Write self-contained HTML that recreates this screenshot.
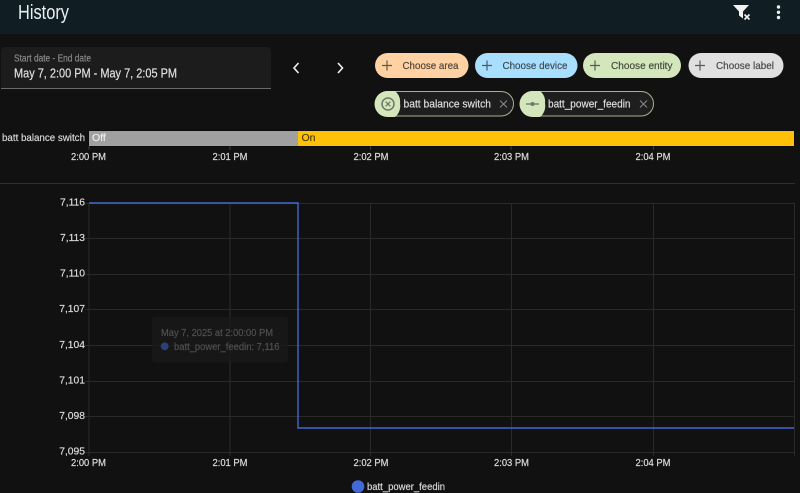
<!DOCTYPE html>
<html><head><meta charset="utf-8"><style>
html,body{margin:0;padding:0;background:#111;width:800px;height:493px;overflow:hidden}
svg{display:block;font-family:"Liberation Sans",sans-serif;filter:blur(.25px)}
.t text{stroke:currentColor;stroke-width:.18px}
</style></head><body>
<svg width="800" height="493" viewBox="0 0 800 493" xmlns="http://www.w3.org/2000/svg">
<rect width="800" height="493" fill="#111"/>
<rect width="800" height="34" fill="#101e24"/>
<text x="18" y="19" font-size="20" fill="#e8f0f2" textLength="51" lengthAdjust="spacingAndGlyphs">History</text>
<!-- filter icon -->
<path d="M733 5H749L743 11.500V18.500L739 15.500V11.500Z" fill="#f2f2f2"/>
<path d="M744.500 14.500L749.500 19.500M749.500 14.500L744.500 19.500" stroke="#f2f2f2" stroke-width="1.600" fill="none"/>
<circle cx="778.500" cy="7" r="1.700" fill="#eee"/><circle cx="778.500" cy="12.300" r="1.700" fill="#eee"/><circle cx="778.500" cy="17.500" r="1.700" fill="#eee"/>
<!-- date -->
<path d="M1 88V51a4 4 0 0 1 4-4H267a4 4 0 0 1 4 4V88Z" fill="#1c1c1c"/>
<rect x="1" y="88" width="270" height="1" fill="#6a6a6a"/>
<g class="t">
<text x="14" y="61.500" font-size="10" fill="#8a8a8a" color="#8a8a8a" textLength="77" lengthAdjust="spacingAndGlyphs">Start date - End date</text>
<text x="14" y="77.500" font-size="13" fill="#e1e1e1" color="#e1e1e1" textLength="163" lengthAdjust="spacingAndGlyphs">May 7, 2:00 PM - May 7, 2:05 PM</text>
</g>
<path d="M298.500 63L294 68L298.500 73" fill="none" stroke="#f0f0f0" stroke-width="1.600"/>
<path d="M338 63L342.500 68L338 73" fill="none" stroke="#f0f0f0" stroke-width="1.600"/>
<!-- chips -->
<rect x="375" y="53" width="93.500" height="25" rx="12.500" fill="#ffd1a3"/>
<rect x="475" y="53" width="102.500" height="25" rx="12.500" fill="#a9dffe"/>
<rect x="583" y="53" width="98" height="25" rx="12.500" fill="#d3e6bc"/>
<rect x="688.500" y="53" width="95" height="25" rx="12.500" fill="#e0e0e0"/>
<g stroke="#5c5c52" stroke-width="1.200" fill="none">
<path d="M382 65.500H392M387 60.500V70.500"/>
<path d="M482 65.500H492M487 60.500V70.500" stroke="#4d5a62"/>
<path d="M590 65.500H600M595 60.500V70.500" stroke="#55604a"/>
<path d="M695 65.500H705M700 60.500V70.500" stroke="#5a5a5a"/>
</g>
<g font-size="10.300" class="t">
<text x="402.500" y="69" fill="#4f463b" color="#4f463b" textLength="56" lengthAdjust="spacingAndGlyphs">Choose area</text>
<text x="502.500" y="69" fill="#3c4850" color="#3c4850" textLength="65" lengthAdjust="spacingAndGlyphs">Choose device</text>
<text x="611" y="69" fill="#434c3a" color="#434c3a" textLength="61.500" lengthAdjust="spacingAndGlyphs">Choose entity</text>
<text x="716" y="69" fill="#4a4a4a" color="#4a4a4a" textLength="58" lengthAdjust="spacingAndGlyphs">Choose label</text>
</g>
<!-- selected chips -->
<rect x="375.500" y="91.500" width="138" height="24.500" rx="12.250" fill="#1e1e1e" stroke="#a4b392"/>
<path d="M387.500 91H395a14 14 0 0 1 5 12.500a14 14 0 0 1-5 13.500H387.500a13 13 0 0 1 0-26Z" fill="#d3e6bc"/>
<circle cx="388" cy="104" r="6" fill="none" stroke="#6d7866" stroke-width="1.500"/>
<path d="M385.700 101.700L390.300 106.300M390.300 101.700L385.700 106.300" stroke="#6d7866" stroke-width="1.200"/>
<g class="t">
<text x="403.500" y="107.500" font-size="10.800" fill="#dedede" color="#dedede" textLength="87.500" lengthAdjust="spacingAndGlyphs">batt balance switch</text>
</g>
<path d="M500 100.500L507 107.500M507 100.500L500 107.500" stroke="#8a8a8a" stroke-width="1"/>
<rect x="520.500" y="91.500" width="133" height="24.500" rx="12.250" fill="#1e1e1e" stroke="#a4b392"/>
<path d="M532.500 91H540a14 14 0 0 1 5 12.500a14 14 0 0 1-5 13.500H532.500a13 13 0 0 1 0-26Z" fill="#d3e6bc"/>
<path d="M526 104H539" stroke="#6d7866" stroke-width="1.300"/><circle cx="532.500" cy="104" r="2" fill="#6d7866"/>
<g class="t">
<text x="548" y="107.500" font-size="10.800" fill="#dedede" color="#dedede" textLength="82.500" lengthAdjust="spacingAndGlyphs">batt_power_feedin</text>
</g>
<path d="M640 100.500L647 107.500M647 100.500L640 107.500" stroke="#8a8a8a" stroke-width="1"/>
<!-- timeline -->
<g class="t">
<text x="2" y="141" font-size="10.500" fill="#d8d8d8" color="#d8d8d8" textLength="83" lengthAdjust="spacingAndGlyphs">batt balance switch</text>
</g>
<rect x="88.500" y="130.500" width="706" height="16" fill="#000" opacity=".5"/>
<rect x="89" y="131" width="209" height="15" fill="#a0a0a0"/>
<rect x="298" y="131" width="496" height="15" fill="#ffc107"/>
<g class="t">
<text x="92" y="141" font-size="10.500" fill="#ececec" color="#ececec">Off</text>
<text x="301.500" y="141" font-size="10.500" fill="#4d3c08" color="#4d3c08">On</text>
</g>
<g stroke="#3a3a3a"><path d="M230 146V150M370.500 146V150M511 146V150M653.500 146V150M89 146V150"/></g>
<g font-size="10.300" fill="#dcdcdc" color="#dcdcdc" class="t">
<text x="71" y="160" textLength="35" lengthAdjust="spacingAndGlyphs">2:00 PM</text><text x="212.500" y="160" textLength="35" lengthAdjust="spacingAndGlyphs">2:01 PM</text><text x="353.500" y="160" textLength="35" lengthAdjust="spacingAndGlyphs">2:02 PM</text><text x="494" y="160" textLength="35" lengthAdjust="spacingAndGlyphs">2:03 PM</text><text x="635.500" y="160" textLength="35" lengthAdjust="spacingAndGlyphs">2:04 PM</text>
</g>
<rect x="0" y="183" width="795" height="1" fill="#2f2f2f"/>
<!-- chart -->
<g stroke="#2a2a2a" stroke-width="1" fill="none">
<path d="M85 203.500H794M85 238.500H794M85 274.500H794M85 309.500H794M85 345.500H794M85 381.500H794M85 416.500H794M85 452.500H794"/>
<path d="M89 203V456M230 203V456M370.500 203V456M511.500 203V456M653.500 203V456M794.500 203V456"/>
</g>
<path d="M89 203H298V428H794" fill="none" stroke="#4169d2" stroke-width="1.400"/>
<g font-size="10.300" fill="#dcdcdc" color="#dcdcdc" text-anchor="end" class="t">
<text x="85" y="205.500">7,116</text><text x="85" y="241">7,113</text><text x="85" y="276.500">7,110</text><text x="85" y="312">7,107</text><text x="85" y="348">7,104</text><text x="85" y="383.500">7,101</text><text x="85" y="419">7,098</text><text x="85" y="454.500">7,095</text>
</g>
<g font-size="10.300" fill="#dcdcdc" color="#dcdcdc" class="t">
<text x="71" y="466" textLength="35" lengthAdjust="spacingAndGlyphs">2:00 PM</text><text x="212.500" y="466" textLength="35" lengthAdjust="spacingAndGlyphs">2:01 PM</text><text x="353.500" y="466" textLength="35" lengthAdjust="spacingAndGlyphs">2:02 PM</text><text x="494" y="466" textLength="35" lengthAdjust="spacingAndGlyphs">2:03 PM</text><text x="635.500" y="466" textLength="35" lengthAdjust="spacingAndGlyphs">2:04 PM</text>
</g>
<!-- tooltip -->
<rect x="152" y="317" width="136" height="45.500" rx="3" fill="#191919" fill-opacity=".75"/>
<g class="t">
<text x="161" y="336" font-size="10.300" fill="#505050" color="#505050" textLength="112" lengthAdjust="spacingAndGlyphs">May 7, 2025 at 2:00:00 PM</text>
<text x="174" y="350" font-size="10.300" fill="#505050" color="#505050" textLength="105.500" lengthAdjust="spacingAndGlyphs">batt_power_feedin: 7,116</text>
</g>
<circle cx="164.700" cy="346.300" r="3.900" fill="#2a4078"/>
<!-- legend -->
<circle cx="358" cy="486.500" r="6.300" fill="#4169d8"/>
<g class="t">
<text x="367" y="490" font-size="10.300" fill="#d8d8d8" color="#d8d8d8" textLength="78" lengthAdjust="spacingAndGlyphs">batt_power_feedin</text>
</g>
</svg>
</body></html>
